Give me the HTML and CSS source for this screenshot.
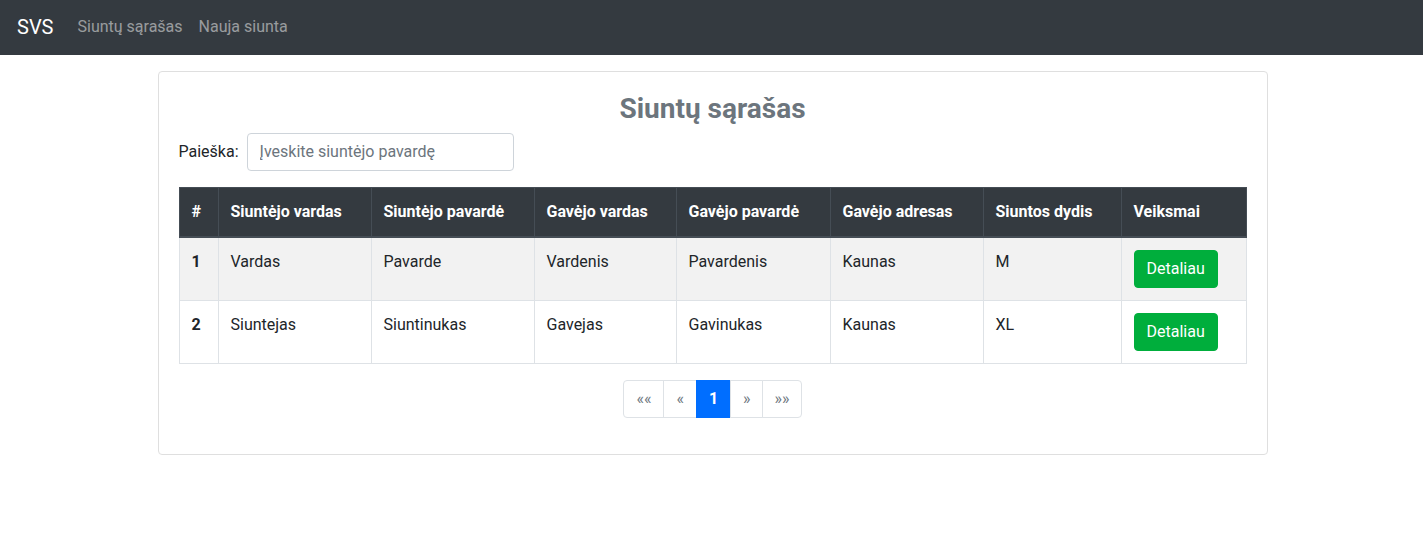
FILE: index.html
```html
<!DOCTYPE html>
<html lang="lt">
<head>
<meta charset="utf-8">
<title>SVS</title>
<link rel="stylesheet" href="styles.css">
</head>
<body>
<nav class="navbar">
  <a class="brand" href="#">SVS</a>
  <a class="nav-link" href="#">Siuntų sąrašas</a>
  <a class="nav-link" href="#">Nauja siunta</a>
</nav>
<main class="container">
  <section class="card">
    <h3 class="title">Siuntų sąrašas</h3>
    <div class="search">
      <label class="search-label" for="q">Paieška:</label>
      <input id="q" class="search-input" type="text" placeholder="Įveskite siuntėjo pavardę">
    </div>
    <table class="table">
      <thead>
        <tr>
          <th>#</th>
          <th>Siuntėjo vardas</th>
          <th>Siuntėjo pavardė</th>
          <th>Gavėjo vardas</th>
          <th>Gavėjo pavardė</th>
          <th>Gavėjo adresas</th>
          <th>Siuntos dydis</th>
          <th>Veiksmai</th>
        </tr>
      </thead>
      <tbody>
        <tr class="striped">
          <th>1</th>
          <td>Vardas</td>
          <td>Pavarde</td>
          <td>Vardenis</td>
          <td>Pavardenis</td>
          <td>Kaunas</td>
          <td>M</td>
          <td><button class="btn">Detaliau</button></td>
        </tr>
        <tr>
          <th>2</th>
          <td>Siuntejas</td>
          <td>Siuntinukas</td>
          <td>Gavejas</td>
          <td>Gavinukas</td>
          <td>Kaunas</td>
          <td>XL</td>
          <td><button class="btn">Detaliau</button></td>
        </tr>
      </tbody>
    </table>
    <ul class="pagination">
      <li class="page"><a class="page-link" href="#">««</a></li>
      <li class="page"><a class="page-link" href="#">«</a></li>
      <li class="page active"><a class="page-link" href="#">1</a></li>
      <li class="page"><a class="page-link" href="#">»</a></li>
      <li class="page"><a class="page-link" href="#">»»</a></li>
    </ul>
  </section>
</main>
</body>
</html>
```
FILE: styles.css
```css
* { box-sizing: border-box; }
body {
  margin: 0;
  font-family: Roboto, "Liberation Sans", sans-serif;
  font-size: 16px;
  line-height: 1.5;
  color: #212529;
  background: #fff;
}
a { text-decoration: none; }

.navbar {
  height: 55px;
  background: #343a40;
  display: flex;
  align-items: center;
  padding: 7px 16px 9px 17px;
}
.brand {
  color: #fff;
  font-size: 20px;
  line-height: 30px;
  margin-right: 16px;
}
.nav-link {
  color: rgba(255, 255, 255, 0.5);
  padding: 8px;
}

.container {
  width: 1140px;
  margin: 0 auto;
  padding: 16px 14px 0 16px;
}
.card {
  border: 1px solid #dfdfdf;
  border-radius: 4px;
  padding: 20px;
}
.title {
  margin: 0 0 7px;
  text-align: center;
  font-size: 28px;
  line-height: 1.2;
  font-weight: 700;
  color: #6c757d;
}
.search {
  display: flex;
  align-items: center;
}
.search-label {
  margin-right: 8px;
}
.search-input {
  width: 267px;
  height: 38px;
  padding: 6px 12px;
  font: inherit;
  color: #495057;
  border: 1px solid #ced4da;
  border-radius: 4px;
}
.search-input::placeholder { color: #6c757d; }

.table {
  width: 100%;
  margin: 16px 0;
  border-collapse: collapse;
}
.table th, .table td {
  padding: 12px;
  border: 1px solid #dee2e6;
  text-align: left;
  vertical-align: top;
}
.table thead th {
  background: #343a40;
  color: #fff;
  border-color: #454d55;
  border-bottom-width: 2px;
  font-weight: 700;
}
.table tbody th { font-weight: 700; }
.table .striped { background: #f2f2f2; }
.table thead th:nth-child(1) { width: 39px; }
.table thead th:nth-child(2) { width: 153px; }
.table thead th:nth-child(3) { width: 163px; }
.table thead th:nth-child(4) { width: 142px; }
.table thead th:nth-child(5) { width: 154px; }
.table thead th:nth-child(6) { width: 153px; }
.table thead th:nth-child(7) { width: 138px; }

.btn {
  font: inherit;
  color: #fff;
  background: #00ae3c;
  border: 1px solid #00ae3c;
  border-radius: 4px;
  padding: 6px 12px;
  line-height: 24px;
  cursor: pointer;
}

.pagination {
  display: flex;
  justify-content: center;
  list-style: none;
  margin: 0 0 16px;
  padding: 0;
}
.page-link {
  display: block;
  padding: 8px 12px;
  line-height: 20px;
  color: #6c757d;
  font-size: 16px;
  border: 1px solid #dee2e6;
  margin-left: -1px;
  background: #fff;
}
.page:first-child .page-link {
  margin-left: 0;
  border-radius: 4px 0 0 4px;
}
.page:last-child .page-link {
  border-radius: 0 4px 4px 0;
  padding-right: 11px;
}
.page:nth-child(4) .page-link {
  padding-right: 11px;
}
.page.active .page-link {
  background: #006eff;
  border-color: #006eff;
  color: #fff;
  font-weight: 700;
}
```
